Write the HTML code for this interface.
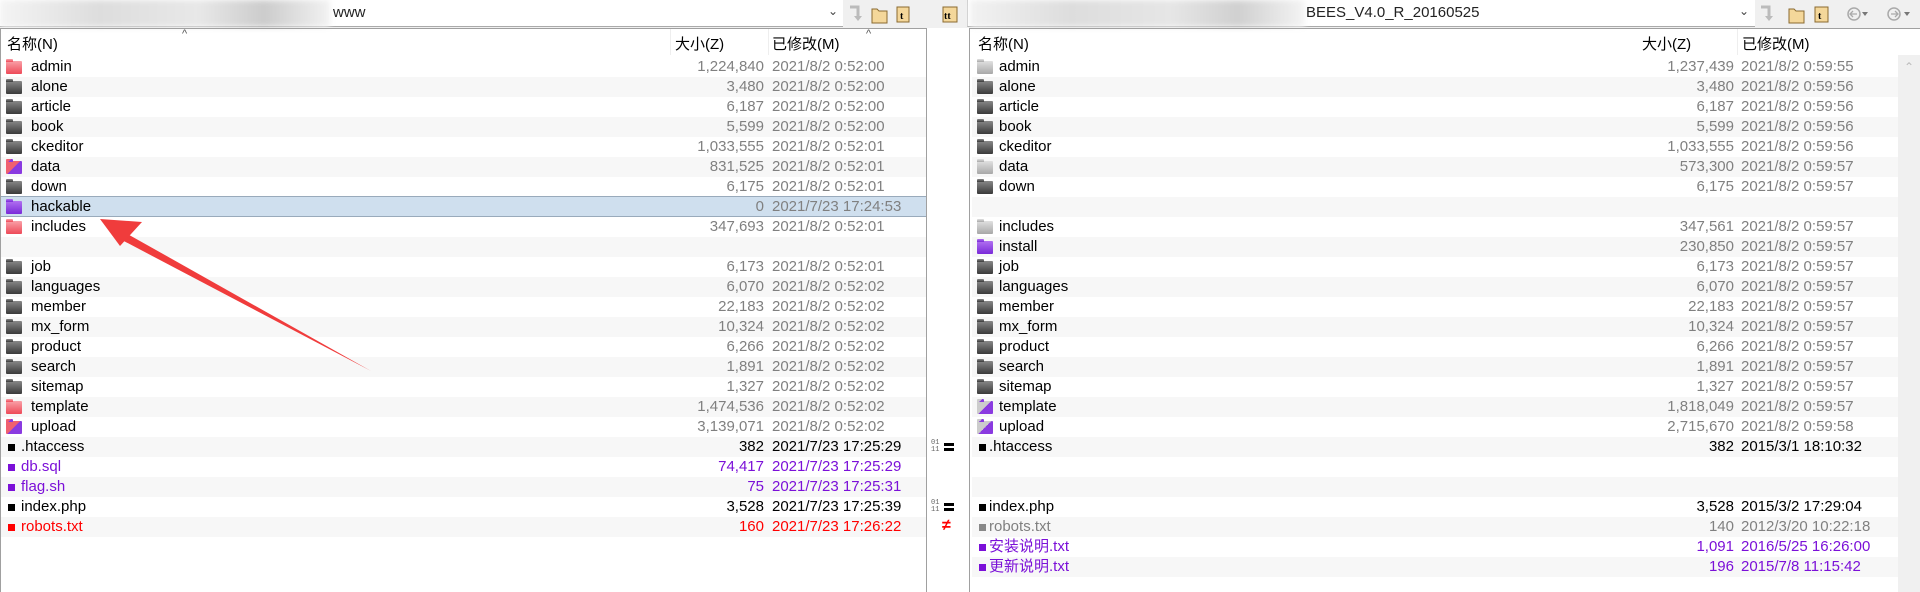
<!DOCTYPE html>
<html><head><meta charset="utf-8"><style>
*{margin:0;padding:0;box-sizing:border-box}
body{width:1920px;height:592px;background:#fff;position:relative;overflow:hidden;font-family:"Liberation Sans","Noto Sans CJK SC",sans-serif;font-size:15px;color:#000}
.a{position:absolute}
.r{position:absolute;height:20px;line-height:20px;white-space:nowrap}
.alt{background:#f7f7f7}
.sz{position:absolute;right:0;text-align:right;color:#808080}
.dt{position:absolute;color:#808080}
.f{position:absolute;top:4px;width:16px;height:13px;border-radius:1px}
.f:before{content:"";position:absolute;left:0;top:-2px;width:7px;height:3px;background:inherit;border-radius:1px 1px 0 0}
.red{background:linear-gradient(#f9a0a8,#ee4a58)}
.gry{background:linear-gradient(#888,#3a3a3a)}
.lg{background:linear-gradient(#e0e0e0,#a8a8a8)}
.pur{background:linear-gradient(#b070f0,#7a2ad8)}
.mix{background:linear-gradient(135deg,#f06070 50%,#8a3ae0 50%)}
.b{position:absolute;top:7px;width:7px;height:7px;background:#000}
.pt{color:#7b10d8}.pt .sz,.pt .dt{color:#7b10d8}
.rd{color:#f00}.rd .sz,.rd .dt{color:#f00}
.bk .sz,.bk .dt{color:#000}
.gt{color:#808080}
.L{left:1px;width:925px}.L .f{left:5px}.L .b{left:7px}.L .n{position:absolute;left:30px}.L .nf{position:absolute;left:20px}.L .sz{right:162px}.L .dt{left:771px}
.R{left:972px;width:926px}.R .f{left:5px}.R .b{left:7px}.R .n{position:absolute;left:27px}.R .nf{position:absolute;left:17px}.R .sz{right:164px}.R .dt{left:769px}
</style></head><body>
<!-- toolbar -->
<div class="a" style="left:0;top:0;width:1920px;height:28px;background:#f0f0f0"></div>
<div class="a" style="left:0;top:0;width:843px;height:27px;background:#fff;border-bottom:1px solid #aaa"></div>
<div class="a" style="left:0;top:0;width:330px;height:27px;background:linear-gradient(90deg,#f4f4f4,#ddd 30%,#e8e8e8 60%,#ccc 80%,#f2f2f2);filter:blur(3px)"></div>
<div class="a" style="left:333px;top:4px;font-size:15px;color:#222">www</div>
<div class="a" style="left:828px;top:4px;font-size:12px;color:#444">&#8964;</div>
<div class="a" style="left:967px;top:0;width:788px;height:27px;background:#fff;border-bottom:1px solid #aaa;border-left:1px solid #ccc"></div>
<div class="a" style="left:970px;top:0;width:335px;height:27px;background:linear-gradient(90deg,#f2f2f2,#ddd 30%,#e6e6e6 60%,#d0d0d0 80%,#f4f4f4);filter:blur(3px)"></div>
<div class="a" style="left:1306px;top:4px;font-size:15px;color:#222">BEES_V4.0_R_20160525</div>
<div class="a" style="left:1739px;top:4px;font-size:12px;color:#444">&#8964;</div>
<svg class="a" style="left:846px;top:0" width="120" height="28"><path d="M4 7h8v10" fill="none" stroke="#bbb" stroke-width="3"/><path d="M8 16l4 5 4-5z" fill="#bbb"/>
<path d="M26 9h5l2 2h8v12H26z" fill="#f4d79a" stroke="#8a6a30"/><rect x="51" y="7" width="12" height="15" fill="#f4d79a" stroke="#8a6a30"/><text x="54" y="19" font-size="10" font-weight="bold" font-family="Liberation Serif">t</text>
<rect x="97" y="7" width="14" height="15" fill="#f4d79a" stroke="#8a6a30"/><text x="98" y="19" font-size="10" font-weight="bold" font-family="Liberation Serif">tt</text></svg>
<svg class="a" style="left:1757px;top:0" width="163" height="28"><path d="M4 7h8v10" fill="none" stroke="#bbb" stroke-width="3"/><path d="M8 16l4 5 4-5z" fill="#bbb"/>
<path d="M32 9h5l2 2h8v12H32z" fill="#f4d79a" stroke="#8a6a30"/><rect x="58" y="7" width="13" height="15" fill="#f4d79a" stroke="#8a6a30"/><text x="61" y="19" font-size="10" font-weight="bold" font-family="Liberation Serif">t</text>
<circle cx="97" cy="14" r="6" fill="none" stroke="#aaa" stroke-width="1.5"/><path d="M100 14h-6m2-3l-3 3 3 3" fill="none" stroke="#aaa" stroke-width="1.3"/><path d="M105 12h6l-3 4z" fill="#777"/>
<circle cx="137" cy="14" r="6" fill="none" stroke="#aaa" stroke-width="1.5"/><path d="M134 14h6m-2-3l3 3-3 3" fill="none" stroke="#aaa" stroke-width="1.3"/><path d="M147 12h6l-3 4z" fill="#777"/></svg>
<!-- panels -->
<div class="a" style="left:0;top:28px;width:927px;height:564px;border:1px solid #a0a0a0;border-bottom:none;border-right:none"></div>
<div class="a" style="left:969px;top:28px;width:951px;height:564px;border-left:1px solid #a0a0a0;border-top:1px solid #a0a0a0"></div>
<div class="a" style="left:1898px;top:55px;width:22px;height:537px;background:#f0f0f0"></div>
<div class="a" style="left:1904px;top:60px;font-size:12px;color:#bbb">&#8963;</div>
<div class="a" style="left:182px;top:28px;font-size:11px;color:#555">^</div>
<div class="a" style="left:866px;top:28px;font-size:11px;color:#555">^</div>
<!-- headers -->
<div class="a" style="left:7px;top:33px">名称(N)</div>
<div class="a" style="left:670px;top:29px;width:1px;height:26px;background:#eee"></div>
<div class="a" style="left:675px;top:33px">大小(Z)</div>
<div class="a" style="left:768px;top:29px;width:1px;height:26px;background:#eee"></div>
<div class="a" style="left:772px;top:33px">已修改(M)</div>
<div class="a" style="left:978px;top:33px">名称(N)</div>
<div class="a" style="left:1642px;top:33px">大小(Z)</div>
<div class="a" style="left:1737px;top:29px;width:1px;height:26px;background:#eee"></div>
<div class="a" style="left:1742px;top:33px">已修改(M)</div>

<!-- left rows -->
<div class="r L" style="top:57px"><i class="f red"></i><span class="n">admin</span><span class="sz">1,224,840</span><span class="dt">2021/8/2 0:52:00</span></div>
<div class="r L alt" style="top:77px"><i class="f gry"></i><span class="n">alone</span><span class="sz">3,480</span><span class="dt">2021/8/2 0:52:00</span></div>
<div class="r L" style="top:97px"><i class="f gry"></i><span class="n">article</span><span class="sz">6,187</span><span class="dt">2021/8/2 0:52:00</span></div>
<div class="r L alt" style="top:117px"><i class="f gry"></i><span class="n">book</span><span class="sz">5,599</span><span class="dt">2021/8/2 0:52:00</span></div>
<div class="r L" style="top:137px"><i class="f gry"></i><span class="n">ckeditor</span><span class="sz">1,033,555</span><span class="dt">2021/8/2 0:52:01</span></div>
<div class="r L alt" style="top:157px"><i class="f mix"></i><span class="n">data</span><span class="sz">831,525</span><span class="dt">2021/8/2 0:52:01</span></div>
<div class="r L" style="top:177px"><i class="f gry"></i><span class="n">down</span><span class="sz">6,175</span><span class="dt">2021/8/2 0:52:01</span></div>
<div class="r L" style="top:196px;height:21px;background:#cfdfee;border-top:1px solid #9ab;border-bottom:1px solid #9ab"><i class="f pur"></i><span class="n">hackable</span><span class="sz">0</span><span class="dt">2021/7/23 17:24:53</span></div>
<div class="r L" style="top:217px"><i class="f red"></i><span class="n">includes</span><span class="sz">347,693</span><span class="dt">2021/8/2 0:52:01</span></div>
<div class="r L alt" style="top:237px"></div>
<div class="r L" style="top:257px"><i class="f gry"></i><span class="n">job</span><span class="sz">6,173</span><span class="dt">2021/8/2 0:52:01</span></div>
<div class="r L alt" style="top:277px"><i class="f gry"></i><span class="n">languages</span><span class="sz">6,070</span><span class="dt">2021/8/2 0:52:02</span></div>
<div class="r L" style="top:297px"><i class="f gry"></i><span class="n">member</span><span class="sz">22,183</span><span class="dt">2021/8/2 0:52:02</span></div>
<div class="r L alt" style="top:317px"><i class="f gry"></i><span class="n">mx_form</span><span class="sz">10,324</span><span class="dt">2021/8/2 0:52:02</span></div>
<div class="r L" style="top:337px"><i class="f gry"></i><span class="n">product</span><span class="sz">6,266</span><span class="dt">2021/8/2 0:52:02</span></div>
<div class="r L alt" style="top:357px"><i class="f gry"></i><span class="n">search</span><span class="sz">1,891</span><span class="dt">2021/8/2 0:52:02</span></div>
<div class="r L" style="top:377px"><i class="f gry"></i><span class="n">sitemap</span><span class="sz">1,327</span><span class="dt">2021/8/2 0:52:02</span></div>
<div class="r L alt" style="top:397px"><i class="f red"></i><span class="n">template</span><span class="sz">1,474,536</span><span class="dt">2021/8/2 0:52:02</span></div>
<div class="r L" style="top:417px"><i class="f mix"></i><span class="n">upload</span><span class="sz">3,139,071</span><span class="dt">2021/8/2 0:52:02</span></div>
<div class="r L alt bk" style="top:437px"><i class="b"></i><span class="nf">.htaccess</span><span class="sz">382</span><span class="dt">2021/7/23 17:25:29</span></div>
<div class="r L pt" style="top:457px"><i class="b" style="background:#7b10d8"></i><span class="nf">db.sql</span><span class="sz">74,417</span><span class="dt">2021/7/23 17:25:29</span></div>
<div class="r L alt pt" style="top:477px"><i class="b" style="background:#7b10d8"></i><span class="nf">flag.sh</span><span class="sz">75</span><span class="dt">2021/7/23 17:25:31</span></div>
<div class="r L bk" style="top:497px"><i class="b"></i><span class="nf">index.php</span><span class="sz">3,528</span><span class="dt">2021/7/23 17:25:39</span></div>
<div class="r L alt rd" style="top:517px"><i class="b" style="background:#f00"></i><span class="nf">robots.txt</span><span class="sz">160</span><span class="dt">2021/7/23 17:26:22</span></div>

<!-- middle -->
<div class="a" style="left:926px;top:28px;width:43px;height:564px;background:#fff;border-left:1px solid #a0a0a0"></div>
<div class="a" style="left:931px;top:440px;font-size:7px;line-height:7px;color:#666;font-family:'Liberation Mono'">01<br>11</div>
<div class="a" style="left:944px;top:443px;width:10px;height:3px;background:#000"></div><div class="a" style="left:944px;top:448px;width:10px;height:3px;background:#000"></div>
<div class="a" style="left:931px;top:500px;font-size:7px;line-height:7px;color:#666;font-family:'Liberation Mono'">01<br>11</div>
<div class="a" style="left:944px;top:503px;width:10px;height:3px;background:#000"></div><div class="a" style="left:944px;top:508px;width:10px;height:3px;background:#000"></div>
<div class="a" style="left:942px;top:517px;font-size:16px;font-weight:bold;color:#f00">&#8800;</div>

<!-- right rows -->
<div class="r R" style="top:57px"><i class="f lg"></i><span class="n">admin</span><span class="sz">1,237,439</span><span class="dt">2021/8/2 0:59:55</span></div>
<div class="r R alt" style="top:77px"><i class="f gry"></i><span class="n">alone</span><span class="sz">3,480</span><span class="dt">2021/8/2 0:59:56</span></div>
<div class="r R" style="top:97px"><i class="f gry"></i><span class="n">article</span><span class="sz">6,187</span><span class="dt">2021/8/2 0:59:56</span></div>
<div class="r R alt" style="top:117px"><i class="f gry"></i><span class="n">book</span><span class="sz">5,599</span><span class="dt">2021/8/2 0:59:56</span></div>
<div class="r R" style="top:137px"><i class="f gry"></i><span class="n">ckeditor</span><span class="sz">1,033,555</span><span class="dt">2021/8/2 0:59:56</span></div>
<div class="r R alt" style="top:157px"><i class="f lg"></i><span class="n">data</span><span class="sz">573,300</span><span class="dt">2021/8/2 0:59:57</span></div>
<div class="r R" style="top:177px"><i class="f gry"></i><span class="n">down</span><span class="sz">6,175</span><span class="dt">2021/8/2 0:59:57</span></div>
<div class="r R alt" style="top:197px"></div>
<div class="r R" style="top:217px"><i class="f lg"></i><span class="n">includes</span><span class="sz">347,561</span><span class="dt">2021/8/2 0:59:57</span></div>
<div class="r R alt" style="top:237px"><i class="f pur"></i><span class="n">install</span><span class="sz">230,850</span><span class="dt">2021/8/2 0:59:57</span></div>
<div class="r R" style="top:257px"><i class="f gry"></i><span class="n">job</span><span class="sz">6,173</span><span class="dt">2021/8/2 0:59:57</span></div>
<div class="r R alt" style="top:277px"><i class="f gry"></i><span class="n">languages</span><span class="sz">6,070</span><span class="dt">2021/8/2 0:59:57</span></div>
<div class="r R" style="top:297px"><i class="f gry"></i><span class="n">member</span><span class="sz">22,183</span><span class="dt">2021/8/2 0:59:57</span></div>
<div class="r R alt" style="top:317px"><i class="f gry"></i><span class="n">mx_form</span><span class="sz">10,324</span><span class="dt">2021/8/2 0:59:57</span></div>
<div class="r R" style="top:337px"><i class="f gry"></i><span class="n">product</span><span class="sz">6,266</span><span class="dt">2021/8/2 0:59:57</span></div>
<div class="r R alt" style="top:357px"><i class="f gry"></i><span class="n">search</span><span class="sz">1,891</span><span class="dt">2021/8/2 0:59:57</span></div>
<div class="r R" style="top:377px"><i class="f gry"></i><span class="n">sitemap</span><span class="sz">1,327</span><span class="dt">2021/8/2 0:59:57</span></div>
<div class="r R alt" style="top:397px"><i class="f" style="background:linear-gradient(135deg,#ccc 50%,#8a3ae0 50%)"></i><span class="n">template</span><span class="sz">1,818,049</span><span class="dt">2021/8/2 0:59:57</span></div>
<div class="r R" style="top:417px"><i class="f" style="background:linear-gradient(135deg,#ccc 50%,#8a3ae0 50%)"></i><span class="n">upload</span><span class="sz">2,715,670</span><span class="dt">2021/8/2 0:59:58</span></div>
<div class="r R alt bk" style="top:437px"><i class="b"></i><span class="nf">.htaccess</span><span class="sz">382</span><span class="dt">2015/3/1 18:10:32</span></div>
<div class="r R" style="top:457px"></div>
<div class="r R alt" style="top:477px"></div>
<div class="r R bk" style="top:497px"><i class="b"></i><span class="nf">index.php</span><span class="sz">3,528</span><span class="dt">2015/3/2 17:29:04</span></div>
<div class="r R alt gt" style="top:517px"><i class="b" style="background:#888"></i><span class="nf">robots.txt</span><span class="sz">140</span><span class="dt">2012/3/20 10:22:18</span></div>
<div class="r R pt" style="top:537px"><i class="b" style="background:#7b10d8"></i><span class="nf">安装说明.txt</span><span class="sz">1,091</span><span class="dt">2016/5/25 16:26:00</span></div>
<div class="r R alt pt" style="top:557px"><i class="b" style="background:#7b10d8"></i><span class="nf">更新说明.txt</span><span class="sz">196</span><span class="dt">2015/7/8 11:15:42</span></div>

<!-- arrow -->
<svg class="a" style="left:0;top:0" width="1920" height="592"><path d="M371 371L124 232l-4 7z" fill="#f03c3c"/><path d="M100 219l42 3-22 24z" fill="#f03c3c"/></svg>
</body></html>
